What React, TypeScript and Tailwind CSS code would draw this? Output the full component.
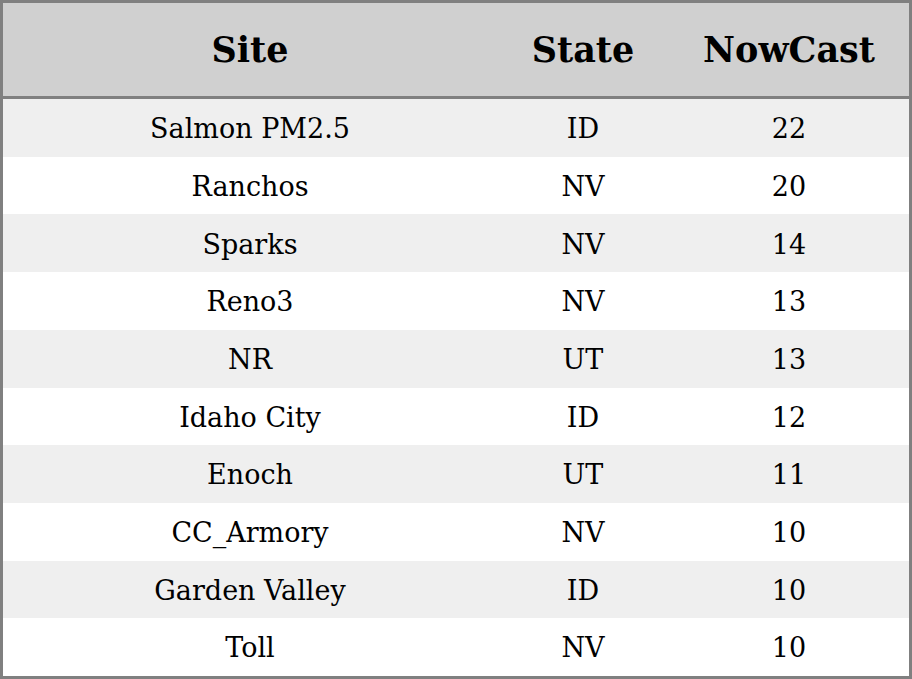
import React from "react";

const rows: [string, string, string][] = [
  ["Salmon PM2.5", "ID", "22"],
  ["Ranchos", "NV", "20"],
  ["Sparks", "NV", "14"],
  ["Reno3", "NV", "13"],
  ["NR", "UT", "13"],
  ["Idaho City", "ID", "12"],
  ["Enoch", "UT", "11"],
  ["CC_Armory", "NV", "10"],
  ["Garden Valley", "ID", "10"],
  ["Toll", "NV", "10"],
];

export default function App() {
  return (
    <div className="w-[912px] h-[679px] overflow-hidden bg-white" style={{ fontFamily: '"DejaVu Serif", serif' }}>
      <div className="w-[912px] h-[679px] border-[3px] border-[#808080] flex flex-col text-black">
        <div className="h-[96px] shrink-0 pt-[2px] bg-[#d0d0d0] flex items-center text-[35px] font-bold border-b-[3px] border-[#808080] box-border">
          <div className="w-[494px] text-center">Site</div>
          <div className="w-[172px] text-center">State</div>
          <div className="flex-1 text-center">NowCast</div>
        </div>
        <div className="flex-1 flex flex-col">
          {rows.map((r, i) => (
            <div
              key={i}
              className={`flex-1 pt-[3px] flex items-center text-[27px] ${i % 2 === 0 ? "bg-[#efefef]" : "bg-white"}`}
            >
              <div className="w-[494px] text-center">{r[0]}</div>
              <div className="w-[172px] text-center">{r[1]}</div>
              <div className="flex-1 text-center">{r[2]}</div>
            </div>
          ))}
        </div>
      </div>
    </div>
  );
}
